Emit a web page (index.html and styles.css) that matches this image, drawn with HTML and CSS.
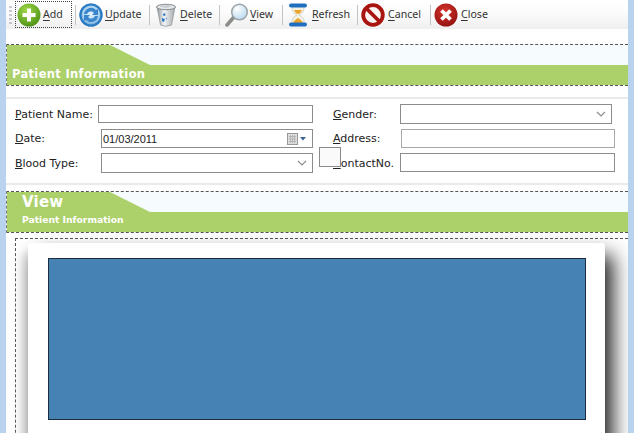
FILE: index.html
```html
<!DOCTYPE html>
<html lang="en">
<head>
<meta charset="utf-8">
<title>Patient Information</title>
<link rel="stylesheet" href="styles.css">
</head>
<body>
<div class="app">
  <div class="toolbar">
    <div class="grip"></div>
    <button class="tool focus">
      <svg class="ico" viewBox="0 0 24 24"><defs><radialGradient id="g1" cx=".4" cy=".3" r=".8"><stop offset="0" stop-color="#a0d848"/><stop offset="1" stop-color="#468c10"/></radialGradient></defs><circle cx="12" cy="12" r="11.500" fill="url(#g1)"/><path d="M12 5.500v13M5.500 12h13" stroke="#fff" stroke-width="4"/></svg>
      <span><u>A</u>dd</span>
    </button>
    <i class="sep"></i>
    <button class="tool t-update">
      <svg class="ico" viewBox="0 0 24 24"><defs><radialGradient id="g2" cx=".5" cy=".45" r=".6"><stop offset="0" stop-color="#e4f2fb"/><stop offset=".6" stop-color="#a8d0ef"/><stop offset="1" stop-color="#1f6fb8"/></radialGradient></defs><circle cx="12" cy="12" r="11.500" fill="url(#g2)"/><circle cx="12" cy="12" r="10.500" fill="none" stroke="#2c7cc4" stroke-width="2.200"/><path d="M5 11a7 7 0 0 1 12-4l2-1v6h-6l2-2a4 4 0 0 0-7 1zM19 13a7 7 0 0 1-12 4l-2 1v-6h6l-2 2a4 4 0 0 0 7-1z" fill="#3a86cc"/></svg>
      <span><u>U</u>pdate</span>
    </button>
    <i class="sep"></i>
    <button class="tool t-delete">
      <svg class="ico" viewBox="0 0 24 24"><defs><linearGradient id="g3" x1="0" x2="1"><stop offset="0" stop-color="#8f9499"/><stop offset=".4" stop-color="#f2f4f6"/><stop offset="1" stop-color="#a5a9ad"/></linearGradient></defs><path d="M3 4 6.500 22q5.500 2.500 11 0L21 4z" fill="url(#g3)" stroke="#8a8e92" stroke-width=".7"/><ellipse cx="12" cy="4" rx="9.500" ry="2.700" fill="#e4e7ea" stroke="#85898d"/><path d="M6 3.500l3-2 2 1.500 3-1.500 3 2-5 1.500z" fill="#c6ccd2"/><path d="M9 11l2-1 .5 2.500-2 .5zM8 15l3 1-1 3-2-1zM12 14l1 2-1 .5z" fill="#2d79c4"/></svg>
      <span><u>D</u>elete</span>
    </button>
    <i class="sep"></i>
    <button class="tool t-view">
      <svg class="ico" viewBox="0 0 24 24"><defs><radialGradient id="g4" cx=".35" cy=".3" r=".8"><stop offset="0" stop-color="#fff"/><stop offset="1" stop-color="#b6d6ee"/></radialGradient></defs><path d="M2 22l7-8" stroke="#8a8d88" stroke-width="3.500" stroke-linecap="round"/><circle cx="14.500" cy="9" r="7.800" fill="url(#g4)" stroke="#9aa3a8" stroke-width="1.500"/></svg>
      <span><u>V</u>iew</span>
    </button>
    <i class="sep"></i>
    <button class="tool t-refresh">
      <svg class="ico" viewBox="0 0 24 24"><path d="M6 3h12v2q0 5-5 7 5 2 5 7v2H6v-2q0-5 5-7-5-2-5-7V5z" fill="#f3f1e2" stroke="#c7c6b6" stroke-width=".7"/><path d="M8 7h8q-1 3-4 4-3-1-4-4zM7 21q0-3 5-6 5 3 5 6z" fill="#eca42a"/><rect x="3" y=".5" width="18" height="4" rx="2" fill="#1f6fc0"/><rect x="3" y="19.500" width="18" height="4" rx="2" fill="#1f6fc0"/></svg>
      <span><u>R</u>efresh</span>
    </button>
    <i class="sep"></i>
    <button class="tool t-cancel">
      <svg class="ico" viewBox="0 0 24 24"><circle cx="12" cy="12" r="9.800" fill="#fbf4f2" stroke="#a81410" stroke-width="3.800"/><path d="M5.500 5.500l13 13" stroke="#a81410" stroke-width="3.800"/></svg>
      <span><u>C</u>ancel</span>
    </button>
    <i class="sep"></i>
    <button class="tool t-close">
      <svg class="ico" viewBox="0 0 24 24"><defs><radialGradient id="g5" cx=".45" cy=".35" r=".75"><stop offset="0" stop-color="#d8342c"/><stop offset="1" stop-color="#8a0f0c"/></radialGradient></defs><circle cx="12" cy="12" r="11.500" fill="url(#g5)"/><path d="M7.500 7.500l9 9M16.500 7.500l-9 9" stroke="#fff" stroke-width="3.800"/></svg>
      <span><u>C</u>lose</span>
    </button>
  </div>

  <section class="band band-one">
    <h2 class="band-title">Patient Information</h2>
  </section>

  <form class="form">
    <div class="col col-left">
      <div class="row"><label><u>P</u>atient Name:</label><input class="field f-name" type="text"></div>
      <div class="row"><label><u>D</u>ate:</label>
        <div class="field f-date"><span>01/03/2011</span>
          <svg class="cal" viewBox="0 0 20 12"><rect x=".5" y=".5" width="10" height="11" fill="#ddd" stroke="#999"/><path d="M2 3.500h7M2 6h7M2 8.500h7M3.500 2v8M5.500 2v8M7.500 2v8" stroke="#aaa" stroke-width=".7"/><path d="M13 4h6l-3 3.500z" fill="#3f5f8f"/></svg>
        </div>
      </div>
      <div class="row"><label class="low"><u>B</u>lood Type:</label><div class="field f-blood"><svg class="chev" viewBox="0 0 10 6"><path d="M1 1l4 4 4-4" fill="none" stroke="#8a8a8a" stroke-width="1.100"/></svg></div></div>
    </div>
    <div class="col col-right">
      <div class="row"><label><u>G</u>ender:</label><div class="field f-gender"><svg class="chev" viewBox="0 0 10 6"><path d="M1 1l4 4 4-4" fill="none" stroke="#8a8a8a" stroke-width="1.100"/></svg></div></div>
      <div class="row"><label><u>A</u>ddress:</label><input class="field f-address" type="text"></div>
      <div class="row"><label class="low"><u>C</u>ontactNo.</label><input class="field f-contact" type="text"></div>
    </div>
    <div class="stray"></div>
  </form>

  <section class="band band-two">
    <div class="band-text">
      <h2 class="view-title">View</h2>
      <p class="view-sub">Patient Information</p>
    </div>
  </section>

  <section class="viewer">
    <div class="paper">
      <div class="report"></div>
    </div>
  </section>
</div>
</body>
</html>
```

FILE: styles.css
```css
* { box-sizing: border-box; }
html, body { margin: 0; height: 100%; overflow: hidden; background: #fff; }
.app {
  width: 634px;
  height: 433px;
  overflow: hidden;
  border-left: 6px solid #b9d3ee;
  border-right: 6px solid #b9d3ee;
  font-family: "DejaVu Sans", sans-serif;
  font-size: 11px;
  color: #222;
}
.toolbar {
  height: 29px;
  display: flex;
  align-items: center;
  background: linear-gradient(#fff, #fbfbfb 45%, #efefef);
  font-family: "Noto Sans", sans-serif;
  font-size: 10.600px;
  color: #333;
}
.grip {
  width: 3px;
  height: 18px;
  margin: 0 3px 0 3px;
  background: repeating-linear-gradient(#aab 0 2px, transparent 2px 4px);
  opacity: .6;
}
.tool {
  display: flex;
  align-items: center;
  gap: 2px;
  height: 27px;
  padding: 0;
  font: inherit;
  color: inherit;
  background: none;
  border: 1px solid transparent;
}
.tool span { margin-top: -2px; }
.tool u { text-underline-offset: 2px; }
.focus { border: 1px dotted #444; width: 57px; padding-left: 1px; }
.ico { width: 24px; height: 24px; flex: none; }
.sep { width: 1px; height: 20px; background: #c4c4c4; margin: 0 2px 0 3px; }
.t-update { width: 68px; }
.t-delete { width: 64px; padding-left: 1px; }
.t-view { width: 57px; padding-left: 2px; gap: 1px; }
.t-refresh { width: 69px; }
.t-cancel { width: 67px; gap: 3px; }
.t-close { gap: 3px; }

.band {
  display: grid;
  margin-top: 15px;
  height: 42px;
  background: #f6fbfe;
  border-top: 1px dashed #555;
  border-bottom: 1px dashed #555;
  border-left: 1px dashed #777;
  color: #fff;
}
.band::before {
  content: "";
  grid-area: 1 / 1;
  background: #acd06a;
  clip-path: polygon(0 0, 103px 0, 143px 20px, 100% 20px, 100% 100%, 0 100%);
}
.band > * { grid-area: 1 / 1; position: relative; }
.band-title {
  margin: 21px 0 0 5px;
  font-size: 11.500px;
  font-weight: bold;
  letter-spacing: .33px;
  line-height: 16px;
}
.form {
  position: relative;
  display: flex;
  height: 88px;
  margin-top: 11px;
  padding: 6px 0 0 9px;
  border-top: 2px solid #eaeaea;
  border-bottom: 2px solid #eaeaea;
}
.col { display: flex; flex-direction: column; gap: 5px; }
.col-left { width: 318px; }
.row { display: flex; align-items: flex-start; height: 19px; }
label { flex: none; line-height: 18px; padding-top: 1px; }
.low { padding-top: 2px; }
.col-left label { width: 86px; }
.col-right label { width: 67px; }
.field {
  display: flex;
  align-items: center;
  justify-content: space-between;
  height: 19px;
  padding: 0;
  background: #fff;
  border: 1px solid #8c8c8c;
  font: 11px "Liberation Sans", sans-serif;
}
.f-name { width: 215px; margin-left: -3px; height: 18px; }
.f-date { width: 212px; padding: 0 5px 0 1px; }
.f-blood { width: 212px; height: 20px; padding-right: 5px; justify-content: flex-end; }
.f-gender { width: 212px; height: 20px; margin-top: -1px; padding-right: 5px; justify-content: flex-end; }
.f-address { width: 214px; margin-left: 1px; border-color: #a8a8a8; }
.f-contact { width: 215px; }
.cal { width: 20px; height: 12px; }
.chev { width: 10px; height: 6px; }
.stray {
  position: absolute;
  left: 313px;
  top: 48px;
  width: 22px;
  height: 20px;
  background: #fafafa;
  border: 1px solid #8a8a8a;
}
.band-two { margin-top: 6px; }
.band-text { padding: 1px 0 0 15px; }
.view-title { margin: 0; font-size: 15px; line-height: 18px; font-weight: bold; letter-spacing: .2px; }
.view-sub { margin: 2px 0 0; font-size: 9.200px; line-height: 14px; font-weight: bold; }
.viewer {
  margin: 5px 0 0 9px;
  height: 220px;
  padding: 4px 0 0 12px;
  border-top: 1px dashed #555;
  border-left: 1px dashed #555;
}
.paper {
  width: 577px;
  height: 260px;
  padding: 15px 19px 0 20px;
  background: #fff;
  border-radius: 3px;
  box-shadow: 8px 12px 20px 0 #222, -5px 10px 10px #ddd;
}
.report {
  width: 538px;
  height: 162px;
  background: #4682b4;
  border: 1px solid #1d2c3d;
}
```
